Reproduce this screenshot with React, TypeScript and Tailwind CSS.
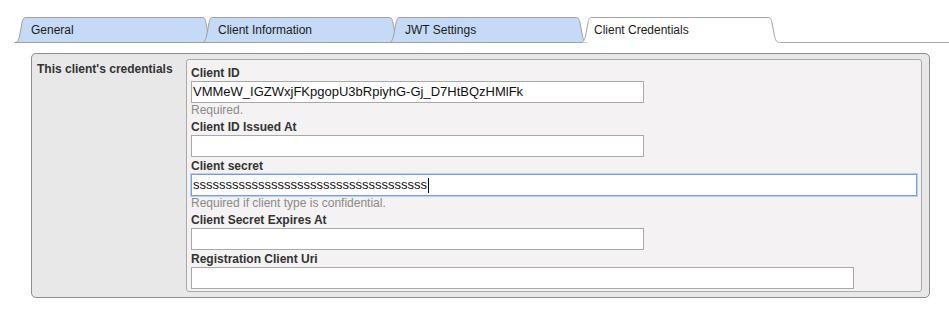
import React from "react";

const font = { fontFamily: '"Liberation Sans", Arial, sans-serif' };

function TabShape({ active, w }: { active: boolean; w: number }) {
  const d = `M0.5,25.5 C3.5,25.5 4.5,23 5.5,19 L8,6 C8.8,2 9.5,0.5 12,0.5 L${w - 12},0.5 C${w - 9.5},0.5 ${w - 8.8},2 ${w - 8},6 L${w - 5.5},19 C${w - 4.5},23 ${w - 3.5},25.5 ${w - 0.5},25.5`;
  return (
    <svg className="absolute inset-0" width={w} height={26} viewBox={`0 0 ${w} 26`}>
      {active ? (
        <>
          <path d={d + " Z"} fill="#ffffff" stroke="none" />
          <path d={d} fill="none" stroke="#a3a3a3" strokeWidth={1} />
        </>
      ) : (
        <path d={d + " Z"} fill="#c4daf6" stroke="#a0a0a0" strokeWidth={1} />
      )}
    </svg>
  );
}

function Tab({
  label,
  active,
  first,
  last,
}: {
  label: string;
  active?: boolean;
  first?: boolean;
  last?: boolean;
}) {
  return (
    <div
      className={`relative h-[26px] w-[200px] shrink-0 ${first ? "" : last ? "-ml-[8px]" : "-ml-[13px]"}`}
    >
      <TabShape active={!!active} w={200} />
      <span
        className={`relative flex h-[26px] items-center pb-[1px] text-[12px] text-[#1b1b1b] ${last ? "pl-[14px]" : "pl-[17px]"}`}
      >
        {label}
      </span>
    </div>
  );
}

function Field({
  label,
  value,
  help,
  width,
  focused,
}: {
  label: string;
  value?: string;
  help?: string;
  width: string;
  focused?: boolean;
}) {
  return (
    <div className="mb-[2px] flex flex-col">
      <div className="h-[15px] text-[12px] font-bold leading-[15px] text-[#333]">{label}</div>
      {focused ? (
        <div
          className={`flex h-[22px] items-center border border-[#77a0e2] bg-white pl-[1px] text-[13px] text-[#111] shadow-[0_0_0_1px_#b9cff2] ${width}`}
        >
          <span>{value}</span>
          <span className="ml-[1px] inline-block h-[15px] w-[1px] bg-black" />
        </div>
      ) : (
        <div
          className={`flex h-[22px] items-center border border-[#a9a9a9] bg-white pl-[1px] text-[13px] text-[#111] ${width}`}
        >
          {value}
        </div>
      )}
      {help && <div className="h-[15px] text-[12px] leading-[15px] text-[#8a8a8a]">{help}</div>}
    </div>
  );
}

export default function App() {
  return (
    <div className="min-h-[310px] w-[949px] bg-white" style={font}>
      <div className="flex pl-[14px] pt-[17px]">
        <Tab label="General" first />
        <Tab label="Client Information" />
        <Tab label="JWT Settings" />
        <Tab label="Client Credentials" active last />
        <div className="h-[26px] flex-1 border-b border-[#a8a8a8]" />
      </div>

      <div className="ml-[31px] mr-[19px] mt-[10px] flex rounded-[5px] border border-[#8e8e8e] bg-[#e9e8e8] pb-[5px] pr-[7px] pt-[5px]">
        <div className="w-[154px] shrink-0 pl-[5px] pt-[3px] text-[12px] font-bold leading-[15px] text-[#333]">
          This client's credentials
        </div>
        <div className="flex-1 rounded-[3px] border border-[#a9a9a9] bg-[#f4f2f2] pl-[4px] pt-[6px]">
          <Field
            label="Client ID"
            value="VMMeW_IGZWxjFKpgopU3bRpiyhG-Gj_D7HtBQzHMlFk"
            help="Required."
            width="w-[453px]"
          />
          <Field label="Client ID Issued At" width="w-[453px]" />
          <Field
            label="Client secret"
            value="ssssssssssssssssssssssssssssssssssss"
            help="Required if client type is confidential."
            width="w-[726px]"
            focused
          />
          <Field label="Client Secret Expires At" width="w-[453px]" />
          <Field label="Registration Client Uri" width="w-[663px]" />
        </div>
      </div>
    </div>
  );
}
